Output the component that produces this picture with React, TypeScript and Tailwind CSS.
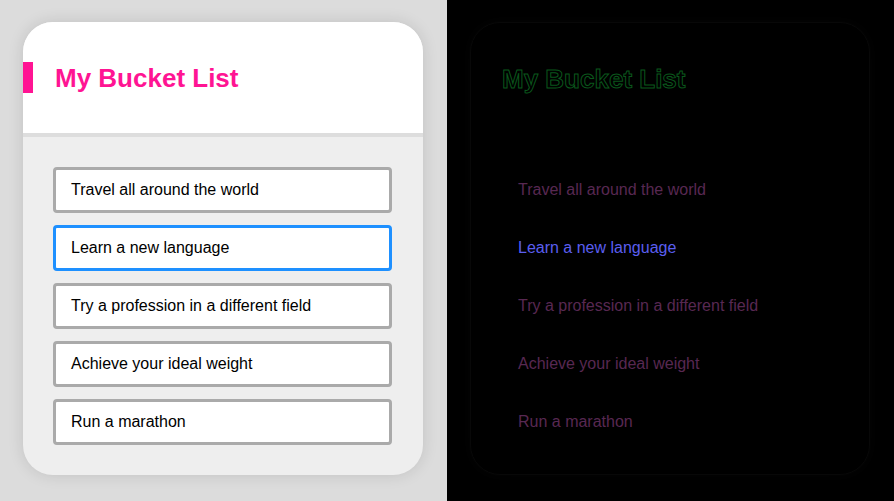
import React from 'react';

const goals = [
  'Travel all around the world',
  'Learn a new language',
  'Try a profession in a different field',
  'Achieve your ideal weight',
  'Run a marathon',
];

function BucketCard() {
  return (
    <div className="w-[400px] h-[453px] rounded-[30px] bg-[#eeeeee] overflow-hidden shadow-[0_0_16px_rgba(0,0,0,0.12)] flex flex-col">
      <div className="h-[115px] bg-white border-b-4 border-[#dddddd] flex items-center shrink-0">
        <div className="w-[10px] h-[31px] bg-[#ff1493]" />
        <h1 className="ml-[22px] text-[26px] font-bold text-[#ff1493] leading-none">My Bucket List</h1>
      </div>
      <ul className="flex flex-col gap-3 p-[30px]">
        {goals.map((g, i) => (
          <li
            key={g}
            className={`h-[46px] w-[339px] bg-white border-[3px] rounded-[4px] flex items-center pl-[15px] text-[16px] text-black ${
              i === 1 ? 'border-[#1e90ff]' : 'border-[#aaaaaa]'
            }`}
          >
            {g}
          </li>
        ))}
      </ul>
    </div>
  );
}

function DiffCard() {
  return (
    <div className="w-[400px] h-[453px] rounded-[30px] bg-black border border-[#080808] shadow-[0_0_12px_rgba(255,255,255,0.02)] flex flex-col">
      <div className="h-[112px] flex items-center shrink-0">
        <div className="w-[9px] h-[31px]" />
        <h1 className="ml-[22px] text-[26px] font-bold text-transparent leading-none [-webkit-text-stroke:1px_#0a561c]">My Bucket List</h1>
      </div>
      <ul className="flex flex-col gap-3 pt-[32px] px-[29px]">
        {goals.map((g, i) => (
          <li
            key={g}
            className={`h-[46px] w-[339px] rounded-[4px] flex items-center pl-[18px] text-[16px] ${
              i === 1 ? 'text-[#5a5ef0]' : 'text-[#582852]'
            }`}
          >
            {g}
          </li>
        ))}
      </ul>
    </div>
  );
}

export default function App() {
  return (
    <div className="flex w-[894px] h-[501px] font-['Liberation_Sans',Arial,sans-serif]">
      <div className="w-[447px] h-full bg-[#dcdcdc] pl-[23px] pt-[22px]">
        <BucketCard />
      </div>
      <div className="w-[447px] h-full bg-black pl-[23px] pt-[22px]">
        <DiffCard />
      </div>
    </div>
  );
}
